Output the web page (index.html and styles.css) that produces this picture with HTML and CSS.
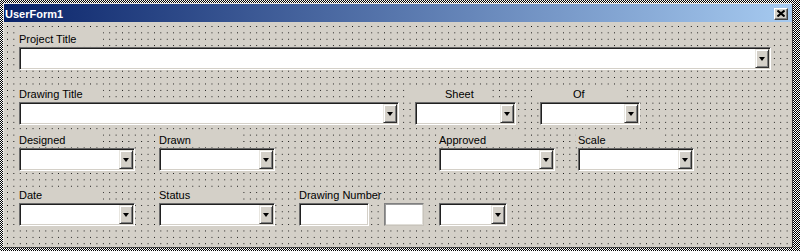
FILE: index.html
```html
<!DOCTYPE html>
<html>
<head>
<meta charset="utf-8">
<link rel="stylesheet" href="styles.css">
</head>
<body>
<div class="form">
  <div class="titlebar">
    <span class="title">UserForm1</span>
    <div class="close">
      <svg width="8" height="7" viewBox="0 0 8 7"><path d="M0.5 0.5 L7.5 6.5 M7.5 0.5 L0.5 6.5" stroke="#000" stroke-width="2" fill="none"/></svg>
    </div>
  </div>
  <div class="client">
    <div class="row r1">
      <div class="labels">
        <div class="lbl l-first">Project Title</div>
      </div>
      <div class="ctrls">
        <div class="combo c-first w752"><div class="btn"><i></i></div></div>
      </div>
    </div>
    <div class="row r2">
      <div class="labels">
        <div class="lbl l-first">Drawing Title</div>
        <div class="lbl l-sheet">Sheet</div>
        <div class="lbl l-of">Of</div>
      </div>
      <div class="ctrls">
        <div class="combo c-first w380"><div class="btn"><i></i></div></div>
        <div class="combo c-sheet w101"><div class="btn"><i></i></div></div>
        <div class="combo c-of w100"><div class="btn"><i></i></div></div>
      </div>
    </div>
    <div class="row r3">
      <div class="labels">
        <div class="lbl l-first">Designed</div>
        <div class="lbl l-second">Drawn</div>
        <div class="lbl l-approved">Approved</div>
        <div class="lbl l-scale">Scale</div>
      </div>
      <div class="ctrls">
        <div class="combo c-first w116"><div class="btn"><i></i></div></div>
        <div class="combo c-second w116"><div class="btn"><i></i></div></div>
        <div class="combo c-approved w116"><div class="btn"><i></i></div></div>
        <div class="combo c-scale w116"><div class="btn"><i></i></div></div>
      </div>
    </div>
    <div class="row r4">
      <div class="labels">
        <div class="lbl l-first">Date</div>
        <div class="lbl l-second">Status</div>
        <div class="lbl l-number">Drawing Number</div>
      </div>
      <div class="ctrls">
        <div class="combo c-first w116"><div class="btn"><i></i></div></div>
        <div class="combo c-second w116"><div class="btn"><i></i></div></div>
        <div class="text c-num1 w70"></div>
        <div class="text flat c-num2 w40"></div>
        <div class="combo c-num3 w68"><div class="btn"><i></i></div></div>
      </div>
    </div>
  </div>
</div>
</body>
</html>
```
FILE: styles.css
```css
* { box-sizing: border-box; }
html, body {
  margin: 0;
  padding: 0;
  width: 800px;
  height: 251px;
  overflow: hidden;
}
body {
  background: repeating-conic-gradient(#000 0 25%, #fff 0 50%) 0 0 / 2px 2px;
  font-family: "Liberation Sans", Arial, sans-serif;
  font-size: 11px;
  color: #000;
}
.form {
  margin: 3px 0 0 3px;
  width: 790px;
  height: 245px;
  background: #d4d0c8;
  border-style: solid;
  border-width: 1px;
  border-color: #e8e6e0 #404040 #404040 #e8e6e0;
  display: flex;
  flex-direction: column;
}
.titlebar {
  height: 18px;
  flex: none;
  background: linear-gradient(to right, #0a246a, #a6caf0);
  display: flex;
  align-items: flex-start;
  justify-content: space-between;
  padding: 3px 4px 0 1px;
}
.title {
  color: #fff;
  font-weight: bold;
  font-size: 11px;
  line-height: 15px;
}
.close {
  margin-top: 1px;
  width: 14px;
  height: 12px;
  background: #d4d0c8;
  border-style: solid;
  border-width: 1px;
  border-color: #fff #404040 #404040 #fff;
  box-shadow: inset -1px -1px 0 #808080;
  display: flex;
  align-items: center;
  justify-content: center;
  padding: 0 1px 1px 0;
}
.close svg { display: block; }
.client {
  flex: 1;
  background-color: #d4d0c8;
  background-image: conic-gradient(from 270deg at 1px 1px, #000 25%, transparent 0);
  background-size: 6.4px 6.4px;
  background-position: 3px 4px;
  padding-top: 10px;
}
.row { display: flex; flex-direction: column; }
.r2, .r4 { margin-top: 17px; }
.r3 { margin-top: 8px; }
.labels, .ctrls { display: flex; }
.ctrls { margin-top: 1px; }
.lbl {
  height: 14px;
  line-height: 14px;
  width: 86px;
  padding-left: 2px;
  background: #d4d0c8;
  white-space: nowrap;
}
.l-first { margin-left: 13px; }
.l-sheet { margin-left: 305px; width: 82px; padding-left: 37px; }
.l-of { margin-left: 47px; padding-left: 36px; }
.l-second { margin-left: 54px; }
.l-approved { margin-left: 194px; }
.l-scale { margin-left: 53px; }
.l-number { margin-left: 54px; width: 80px; }

.combo, .text {
  height: 23px;
  background: #fff;
  border-style: solid;
  border-width: 1px;
  border-color: #6a6a6a #fff #fff #6a6a6a;
  box-shadow: inset 1px 1px 0 #202020, inset -1px -1px 0 #d4d0c8;
  display: flex;
  justify-content: flex-end;
  padding: 1px;
}
.text.flat {
  border-color: #808080 #c8c4bc #c8c4bc #808080;
  box-shadow: inset 1px 1px 0 #9a9a9a, inset -1px -1px 0 #e0ded8;
}
.btn {
  width: 14px;
  height: 19px;
  background: #d4d0c8;
  border-style: solid;
  border-width: 1px;
  border-color: #e8e6e0 #303030 #303030 #e8e6e0;
  box-shadow: inset 1px 1px 0 #fff, inset -1px -1px 0 #808080;
  display: flex;
  align-items: center;
  justify-content: center;
}
.btn i {
  display: block;
  width: 0;
  height: 0;
  border-left: 3.5px solid transparent;
  border-right: 3.5px solid transparent;
  border-top: 4px solid #000;
  margin-top: 1px;
}
.c-first { margin-left: 15px; }
.c-sheet { margin-left: 16px; }
.c-of { margin-left: 24px; }
.c-second { margin-left: 24px; }
.c-approved { margin-left: 164px; }
.c-scale { margin-left: 23px; }
.c-num1 { margin-left: 24px; }
.c-num2 { margin-left: 15px; }
.c-num3 { margin-left: 15px; }
.w752 { width: 752px; }
.w380 { width: 380px; }
.w101 { width: 101px; }
.w100 { width: 100px; }
.w116 { width: 116px; }
.w70 { width: 70px; }
.w40 { width: 40px; }
.w68 { width: 68px; }
```
